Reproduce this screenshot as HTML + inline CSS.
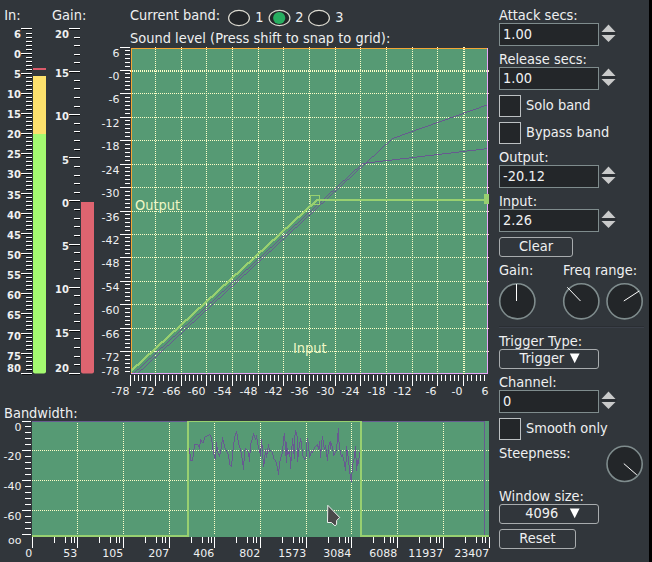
<!DOCTYPE html>
<html lang="en"><head><meta charset="utf-8"><title>Compressor Multi</title>
<style>
html,body{margin:0;padding:0;background:#31363b;overflow:hidden}
body{width:652px;height:562px}
svg{display:block;font-family:"DejaVu Sans","Liberation Sans",sans-serif}
.c{shape-rendering:crispEdges}
</style></head><body>
<svg width="652" height="562" viewBox="0 0 652 562">
<rect x="0" y="0" width="652" height="562" fill="#31363b" />
<rect x="649" y="0" width="3" height="562" fill="#000" />
<g class="c">
<text transform="translate(4.2 20) scale(1 1.055)" font-size="13" text-anchor="start" font-weight="normal" fill="#eff0f1" >In:</text>
<rect x="22" y="29" width="10" height="1" fill="#0c0e10" />
<rect x="21" y="28" width="11" height="1" fill="#ffffff" />
<rect x="27" y="34" width="5" height="1" fill="#0c0e10" />
<rect x="26" y="33" width="6" height="1" fill="#ffffff" />
<rect x="27" y="38" width="5" height="1" fill="#0c0e10" />
<rect x="26" y="37" width="6" height="1" fill="#ffffff" />
<rect x="27" y="42" width="5" height="1" fill="#0c0e10" />
<rect x="26" y="41" width="6" height="1" fill="#ffffff" />
<rect x="27" y="46" width="5" height="1" fill="#0c0e10" />
<rect x="26" y="45" width="6" height="1" fill="#ffffff" />
<rect x="27" y="50" width="5" height="1" fill="#0c0e10" />
<rect x="26" y="49" width="6" height="1" fill="#ffffff" />
<rect x="22" y="54" width="10" height="1" fill="#0c0e10" />
<rect x="21" y="53" width="11" height="1" fill="#ffffff" />
<rect x="27" y="58" width="5" height="1" fill="#0c0e10" />
<rect x="26" y="57" width="6" height="1" fill="#ffffff" />
<rect x="27" y="62" width="5" height="1" fill="#0c0e10" />
<rect x="26" y="61" width="6" height="1" fill="#ffffff" />
<rect x="27" y="66" width="5" height="1" fill="#0c0e10" />
<rect x="26" y="65" width="6" height="1" fill="#ffffff" />
<rect x="27" y="70" width="5" height="1" fill="#0c0e10" />
<rect x="26" y="69" width="6" height="1" fill="#ffffff" />
<rect x="22" y="74" width="10" height="1" fill="#0c0e10" />
<rect x="21" y="73" width="11" height="1" fill="#ffffff" />
<rect x="27" y="78" width="5" height="1" fill="#0c0e10" />
<rect x="26" y="77" width="6" height="1" fill="#ffffff" />
<rect x="27" y="82" width="5" height="1" fill="#0c0e10" />
<rect x="26" y="81" width="6" height="1" fill="#ffffff" />
<rect x="27" y="86" width="5" height="1" fill="#0c0e10" />
<rect x="26" y="85" width="6" height="1" fill="#ffffff" />
<rect x="27" y="90" width="5" height="1" fill="#0c0e10" />
<rect x="26" y="89" width="6" height="1" fill="#ffffff" />
<rect x="22" y="94" width="10" height="1" fill="#0c0e10" />
<rect x="21" y="93" width="11" height="1" fill="#ffffff" />
<rect x="27" y="98" width="5" height="1" fill="#0c0e10" />
<rect x="26" y="97" width="6" height="1" fill="#ffffff" />
<rect x="27" y="102" width="5" height="1" fill="#0c0e10" />
<rect x="26" y="101" width="6" height="1" fill="#ffffff" />
<rect x="27" y="106" width="5" height="1" fill="#0c0e10" />
<rect x="26" y="105" width="6" height="1" fill="#ffffff" />
<rect x="27" y="110" width="5" height="1" fill="#0c0e10" />
<rect x="26" y="109" width="6" height="1" fill="#ffffff" />
<rect x="22" y="114" width="10" height="1" fill="#0c0e10" />
<rect x="21" y="113" width="11" height="1" fill="#ffffff" />
<rect x="27" y="118" width="5" height="1" fill="#0c0e10" />
<rect x="26" y="117" width="6" height="1" fill="#ffffff" />
<rect x="27" y="122" width="5" height="1" fill="#0c0e10" />
<rect x="26" y="121" width="6" height="1" fill="#ffffff" />
<rect x="27" y="126" width="5" height="1" fill="#0c0e10" />
<rect x="26" y="125" width="6" height="1" fill="#ffffff" />
<rect x="27" y="130" width="5" height="1" fill="#0c0e10" />
<rect x="26" y="129" width="6" height="1" fill="#ffffff" />
<rect x="22" y="134" width="10" height="1" fill="#0c0e10" />
<rect x="21" y="133" width="11" height="1" fill="#ffffff" />
<rect x="27" y="138" width="5" height="1" fill="#0c0e10" />
<rect x="26" y="137" width="6" height="1" fill="#ffffff" />
<rect x="27" y="142" width="5" height="1" fill="#0c0e10" />
<rect x="26" y="141" width="6" height="1" fill="#ffffff" />
<rect x="27" y="146" width="5" height="1" fill="#0c0e10" />
<rect x="26" y="145" width="6" height="1" fill="#ffffff" />
<rect x="27" y="150" width="5" height="1" fill="#0c0e10" />
<rect x="26" y="149" width="6" height="1" fill="#ffffff" />
<rect x="22" y="154" width="10" height="1" fill="#0c0e10" />
<rect x="21" y="153" width="11" height="1" fill="#ffffff" />
<rect x="27" y="158" width="5" height="1" fill="#0c0e10" />
<rect x="26" y="157" width="6" height="1" fill="#ffffff" />
<rect x="27" y="162" width="5" height="1" fill="#0c0e10" />
<rect x="26" y="161" width="6" height="1" fill="#ffffff" />
<rect x="27" y="166" width="5" height="1" fill="#0c0e10" />
<rect x="26" y="165" width="6" height="1" fill="#ffffff" />
<rect x="27" y="170" width="5" height="1" fill="#0c0e10" />
<rect x="26" y="169" width="6" height="1" fill="#ffffff" />
<rect x="22" y="174" width="10" height="1" fill="#0c0e10" />
<rect x="21" y="173" width="11" height="1" fill="#ffffff" />
<rect x="27" y="178" width="5" height="1" fill="#0c0e10" />
<rect x="26" y="177" width="6" height="1" fill="#ffffff" />
<rect x="27" y="182" width="5" height="1" fill="#0c0e10" />
<rect x="26" y="181" width="6" height="1" fill="#ffffff" />
<rect x="27" y="186" width="5" height="1" fill="#0c0e10" />
<rect x="26" y="185" width="6" height="1" fill="#ffffff" />
<rect x="27" y="190" width="5" height="1" fill="#0c0e10" />
<rect x="26" y="189" width="6" height="1" fill="#ffffff" />
<rect x="22" y="194" width="10" height="1" fill="#0c0e10" />
<rect x="21" y="193" width="11" height="1" fill="#ffffff" />
<rect x="27" y="198" width="5" height="1" fill="#0c0e10" />
<rect x="26" y="197" width="6" height="1" fill="#ffffff" />
<rect x="27" y="202" width="5" height="1" fill="#0c0e10" />
<rect x="26" y="201" width="6" height="1" fill="#ffffff" />
<rect x="27" y="206" width="5" height="1" fill="#0c0e10" />
<rect x="26" y="205" width="6" height="1" fill="#ffffff" />
<rect x="27" y="210" width="5" height="1" fill="#0c0e10" />
<rect x="26" y="209" width="6" height="1" fill="#ffffff" />
<rect x="22" y="214" width="10" height="1" fill="#0c0e10" />
<rect x="21" y="213" width="11" height="1" fill="#ffffff" />
<rect x="27" y="218" width="5" height="1" fill="#0c0e10" />
<rect x="26" y="217" width="6" height="1" fill="#ffffff" />
<rect x="27" y="222" width="5" height="1" fill="#0c0e10" />
<rect x="26" y="221" width="6" height="1" fill="#ffffff" />
<rect x="27" y="226" width="5" height="1" fill="#0c0e10" />
<rect x="26" y="225" width="6" height="1" fill="#ffffff" />
<rect x="27" y="230" width="5" height="1" fill="#0c0e10" />
<rect x="26" y="229" width="6" height="1" fill="#ffffff" />
<rect x="22" y="234" width="10" height="1" fill="#0c0e10" />
<rect x="21" y="233" width="11" height="1" fill="#ffffff" />
<rect x="27" y="238" width="5" height="1" fill="#0c0e10" />
<rect x="26" y="237" width="6" height="1" fill="#ffffff" />
<rect x="27" y="242" width="5" height="1" fill="#0c0e10" />
<rect x="26" y="241" width="6" height="1" fill="#ffffff" />
<rect x="27" y="246" width="5" height="1" fill="#0c0e10" />
<rect x="26" y="245" width="6" height="1" fill="#ffffff" />
<rect x="27" y="250" width="5" height="1" fill="#0c0e10" />
<rect x="26" y="249" width="6" height="1" fill="#ffffff" />
<rect x="22" y="254" width="10" height="1" fill="#0c0e10" />
<rect x="21" y="253" width="11" height="1" fill="#ffffff" />
<rect x="27" y="258" width="5" height="1" fill="#0c0e10" />
<rect x="26" y="257" width="6" height="1" fill="#ffffff" />
<rect x="27" y="262" width="5" height="1" fill="#0c0e10" />
<rect x="26" y="261" width="6" height="1" fill="#ffffff" />
<rect x="27" y="266" width="5" height="1" fill="#0c0e10" />
<rect x="26" y="265" width="6" height="1" fill="#ffffff" />
<rect x="27" y="270" width="5" height="1" fill="#0c0e10" />
<rect x="26" y="269" width="6" height="1" fill="#ffffff" />
<rect x="22" y="274" width="10" height="1" fill="#0c0e10" />
<rect x="21" y="273" width="11" height="1" fill="#ffffff" />
<rect x="27" y="278" width="5" height="1" fill="#0c0e10" />
<rect x="26" y="277" width="6" height="1" fill="#ffffff" />
<rect x="27" y="282" width="5" height="1" fill="#0c0e10" />
<rect x="26" y="281" width="6" height="1" fill="#ffffff" />
<rect x="27" y="286" width="5" height="1" fill="#0c0e10" />
<rect x="26" y="285" width="6" height="1" fill="#ffffff" />
<rect x="27" y="290" width="5" height="1" fill="#0c0e10" />
<rect x="26" y="289" width="6" height="1" fill="#ffffff" />
<rect x="22" y="294" width="10" height="1" fill="#0c0e10" />
<rect x="21" y="293" width="11" height="1" fill="#ffffff" />
<rect x="27" y="298" width="5" height="1" fill="#0c0e10" />
<rect x="26" y="297" width="6" height="1" fill="#ffffff" />
<rect x="27" y="302" width="5" height="1" fill="#0c0e10" />
<rect x="26" y="301" width="6" height="1" fill="#ffffff" />
<rect x="27" y="306" width="5" height="1" fill="#0c0e10" />
<rect x="26" y="305" width="6" height="1" fill="#ffffff" />
<rect x="27" y="310" width="5" height="1" fill="#0c0e10" />
<rect x="26" y="309" width="6" height="1" fill="#ffffff" />
<rect x="22" y="314" width="10" height="1" fill="#0c0e10" />
<rect x="21" y="313" width="11" height="1" fill="#ffffff" />
<rect x="27" y="318" width="5" height="1" fill="#0c0e10" />
<rect x="26" y="317" width="6" height="1" fill="#ffffff" />
<rect x="27" y="322" width="5" height="1" fill="#0c0e10" />
<rect x="26" y="321" width="6" height="1" fill="#ffffff" />
<rect x="27" y="326" width="5" height="1" fill="#0c0e10" />
<rect x="26" y="325" width="6" height="1" fill="#ffffff" />
<rect x="27" y="330" width="5" height="1" fill="#0c0e10" />
<rect x="26" y="329" width="6" height="1" fill="#ffffff" />
<rect x="22" y="334" width="10" height="1" fill="#0c0e10" />
<rect x="21" y="333" width="11" height="1" fill="#ffffff" />
<rect x="27" y="338" width="5" height="1" fill="#0c0e10" />
<rect x="26" y="337" width="6" height="1" fill="#ffffff" />
<rect x="27" y="342" width="5" height="1" fill="#0c0e10" />
<rect x="26" y="341" width="6" height="1" fill="#ffffff" />
<rect x="27" y="346" width="5" height="1" fill="#0c0e10" />
<rect x="26" y="345" width="6" height="1" fill="#ffffff" />
<rect x="27" y="350" width="5" height="1" fill="#0c0e10" />
<rect x="26" y="349" width="6" height="1" fill="#ffffff" />
<rect x="22" y="354" width="10" height="1" fill="#0c0e10" />
<rect x="21" y="353" width="11" height="1" fill="#ffffff" />
<rect x="27" y="358" width="5" height="1" fill="#0c0e10" />
<rect x="26" y="357" width="6" height="1" fill="#ffffff" />
<rect x="27" y="362" width="5" height="1" fill="#0c0e10" />
<rect x="26" y="361" width="6" height="1" fill="#ffffff" />
<rect x="27" y="366" width="5" height="1" fill="#0c0e10" />
<rect x="26" y="365" width="6" height="1" fill="#ffffff" />
<rect x="27" y="370" width="5" height="1" fill="#0c0e10" />
<rect x="26" y="369" width="6" height="1" fill="#ffffff" />
<rect x="22" y="374" width="10" height="1" fill="#0c0e10" />
<rect x="21" y="373" width="11" height="1" fill="#ffffff" />
</g>
<text x="21" y="37.5" font-size="10" text-anchor="end" font-weight="bold" fill="#eff0f1" >6</text>
<text x="21" y="57.5" font-size="10" text-anchor="end" font-weight="bold" fill="#eff0f1" >0</text>
<text x="21" y="77.7" font-size="10" text-anchor="end" font-weight="bold" fill="#eff0f1" >5</text>
<text x="21" y="97.8" font-size="10" text-anchor="end" font-weight="bold" fill="#eff0f1" >10</text>
<text x="21" y="118.0" font-size="10" text-anchor="end" font-weight="bold" fill="#eff0f1" >15</text>
<text x="21" y="138.1" font-size="10" text-anchor="end" font-weight="bold" fill="#eff0f1" >20</text>
<text x="21" y="158.2" font-size="10" text-anchor="end" font-weight="bold" fill="#eff0f1" >25</text>
<text x="21" y="178.4" font-size="10" text-anchor="end" font-weight="bold" fill="#eff0f1" >30</text>
<text x="21" y="198.6" font-size="10" text-anchor="end" font-weight="bold" fill="#eff0f1" >35</text>
<text x="21" y="218.7" font-size="10" text-anchor="end" font-weight="bold" fill="#eff0f1" >40</text>
<text x="21" y="238.9" font-size="10" text-anchor="end" font-weight="bold" fill="#eff0f1" >45</text>
<text x="21" y="259.0" font-size="10" text-anchor="end" font-weight="bold" fill="#eff0f1" >50</text>
<text x="21" y="279.1" font-size="10" text-anchor="end" font-weight="bold" fill="#eff0f1" >55</text>
<text x="21" y="299.3" font-size="10" text-anchor="end" font-weight="bold" fill="#eff0f1" >60</text>
<text x="21" y="319.4" font-size="10" text-anchor="end" font-weight="bold" fill="#eff0f1" >65</text>
<text x="21" y="339.6" font-size="10" text-anchor="end" font-weight="bold" fill="#eff0f1" >70</text>
<text x="21" y="359.8" font-size="10" text-anchor="end" font-weight="bold" fill="#eff0f1" >75</text>
<text x="21" y="371.9" font-size="10" text-anchor="end" font-weight="bold" fill="#eff0f1" >80</text>
<g class="c">
<rect x="33" y="68" width="13" height="2" fill="#da5a6a" />
<rect x="33" y="76" width="13" height="58" fill="#fce06c" />
</g>
<path d="M33 134 H46 V371.5 Q46 373.5 44 373.5 H35 Q33 373.5 33 371.5 Z" fill="#a4fa70"/>
<text transform="translate(52 20) scale(1 1.055)" font-size="13" text-anchor="start" font-weight="normal" fill="#eff0f1" >Gain:</text>
<g class="c">
<rect x="70" y="29" width="10" height="1" fill="#0c0e10" />
<rect x="69" y="28" width="11" height="1" fill="#ffffff" />
<rect x="75" y="38" width="5" height="1" fill="#0c0e10" />
<rect x="74" y="37" width="6" height="1" fill="#ffffff" />
<rect x="75" y="46" width="5" height="1" fill="#0c0e10" />
<rect x="74" y="45" width="6" height="1" fill="#ffffff" />
<rect x="75" y="55" width="5" height="1" fill="#0c0e10" />
<rect x="74" y="54" width="6" height="1" fill="#ffffff" />
<rect x="75" y="63" width="5" height="1" fill="#0c0e10" />
<rect x="74" y="62" width="6" height="1" fill="#ffffff" />
<rect x="70" y="72" width="10" height="1" fill="#0c0e10" />
<rect x="69" y="71" width="11" height="1" fill="#ffffff" />
<rect x="75" y="81" width="5" height="1" fill="#0c0e10" />
<rect x="74" y="80" width="6" height="1" fill="#ffffff" />
<rect x="75" y="89" width="5" height="1" fill="#0c0e10" />
<rect x="74" y="88" width="6" height="1" fill="#ffffff" />
<rect x="75" y="98" width="5" height="1" fill="#0c0e10" />
<rect x="74" y="97" width="6" height="1" fill="#ffffff" />
<rect x="75" y="107" width="5" height="1" fill="#0c0e10" />
<rect x="74" y="106" width="6" height="1" fill="#ffffff" />
<rect x="70" y="115" width="10" height="1" fill="#0c0e10" />
<rect x="69" y="114" width="11" height="1" fill="#ffffff" />
<rect x="75" y="124" width="5" height="1" fill="#0c0e10" />
<rect x="74" y="123" width="6" height="1" fill="#ffffff" />
<rect x="75" y="132" width="5" height="1" fill="#0c0e10" />
<rect x="74" y="131" width="6" height="1" fill="#ffffff" />
<rect x="75" y="141" width="5" height="1" fill="#0c0e10" />
<rect x="74" y="140" width="6" height="1" fill="#ffffff" />
<rect x="75" y="150" width="5" height="1" fill="#0c0e10" />
<rect x="74" y="149" width="6" height="1" fill="#ffffff" />
<rect x="70" y="158" width="10" height="1" fill="#0c0e10" />
<rect x="69" y="157" width="11" height="1" fill="#ffffff" />
<rect x="75" y="167" width="5" height="1" fill="#0c0e10" />
<rect x="74" y="166" width="6" height="1" fill="#ffffff" />
<rect x="75" y="176" width="5" height="1" fill="#0c0e10" />
<rect x="74" y="175" width="6" height="1" fill="#ffffff" />
<rect x="75" y="184" width="5" height="1" fill="#0c0e10" />
<rect x="74" y="183" width="6" height="1" fill="#ffffff" />
<rect x="75" y="193" width="5" height="1" fill="#0c0e10" />
<rect x="74" y="192" width="6" height="1" fill="#ffffff" />
<rect x="70" y="201" width="10" height="1" fill="#0c0e10" />
<rect x="69" y="200" width="11" height="1" fill="#ffffff" />
<rect x="75" y="210" width="5" height="1" fill="#0c0e10" />
<rect x="74" y="209" width="6" height="1" fill="#ffffff" />
<rect x="75" y="219" width="5" height="1" fill="#0c0e10" />
<rect x="74" y="218" width="6" height="1" fill="#ffffff" />
<rect x="75" y="227" width="5" height="1" fill="#0c0e10" />
<rect x="74" y="226" width="6" height="1" fill="#ffffff" />
<rect x="75" y="236" width="5" height="1" fill="#0c0e10" />
<rect x="74" y="235" width="6" height="1" fill="#ffffff" />
<rect x="70" y="245" width="10" height="1" fill="#0c0e10" />
<rect x="69" y="244" width="11" height="1" fill="#ffffff" />
<rect x="75" y="253" width="5" height="1" fill="#0c0e10" />
<rect x="74" y="252" width="6" height="1" fill="#ffffff" />
<rect x="75" y="262" width="5" height="1" fill="#0c0e10" />
<rect x="74" y="261" width="6" height="1" fill="#ffffff" />
<rect x="75" y="270" width="5" height="1" fill="#0c0e10" />
<rect x="74" y="269" width="6" height="1" fill="#ffffff" />
<rect x="75" y="279" width="5" height="1" fill="#0c0e10" />
<rect x="74" y="278" width="6" height="1" fill="#ffffff" />
<rect x="70" y="288" width="10" height="1" fill="#0c0e10" />
<rect x="69" y="287" width="11" height="1" fill="#ffffff" />
<rect x="75" y="296" width="5" height="1" fill="#0c0e10" />
<rect x="74" y="295" width="6" height="1" fill="#ffffff" />
<rect x="75" y="305" width="5" height="1" fill="#0c0e10" />
<rect x="74" y="304" width="6" height="1" fill="#ffffff" />
<rect x="75" y="314" width="5" height="1" fill="#0c0e10" />
<rect x="74" y="313" width="6" height="1" fill="#ffffff" />
<rect x="75" y="322" width="5" height="1" fill="#0c0e10" />
<rect x="74" y="321" width="6" height="1" fill="#ffffff" />
<rect x="70" y="331" width="10" height="1" fill="#0c0e10" />
<rect x="69" y="330" width="11" height="1" fill="#ffffff" />
<rect x="75" y="339" width="5" height="1" fill="#0c0e10" />
<rect x="74" y="338" width="6" height="1" fill="#ffffff" />
<rect x="75" y="348" width="5" height="1" fill="#0c0e10" />
<rect x="74" y="347" width="6" height="1" fill="#ffffff" />
<rect x="75" y="357" width="5" height="1" fill="#0c0e10" />
<rect x="74" y="356" width="6" height="1" fill="#ffffff" />
<rect x="75" y="365" width="5" height="1" fill="#0c0e10" />
<rect x="74" y="364" width="6" height="1" fill="#ffffff" />
<rect x="70" y="374" width="10" height="1" fill="#0c0e10" />
<rect x="69" y="373" width="11" height="1" fill="#ffffff" />
</g>
<text x="69" y="37.5" font-size="10" text-anchor="end" font-weight="bold" fill="#eff0f1" >20</text>
<text x="69" y="76.6" font-size="10" text-anchor="end" font-weight="bold" fill="#eff0f1" >15</text>
<text x="69" y="120.0" font-size="10" text-anchor="end" font-weight="bold" fill="#eff0f1" >10</text>
<text x="69" y="163.5" font-size="10" text-anchor="end" font-weight="bold" fill="#eff0f1" >5</text>
<text x="69" y="206.7" font-size="10" text-anchor="end" font-weight="bold" fill="#eff0f1" >0</text>
<text x="69" y="249.8" font-size="10" text-anchor="end" font-weight="bold" fill="#eff0f1" >5</text>
<text x="69" y="293.4" font-size="10" text-anchor="end" font-weight="bold" fill="#eff0f1" >10</text>
<text x="69" y="336.8" font-size="10" text-anchor="end" font-weight="bold" fill="#eff0f1" >15</text>
<text x="69" y="371.8" font-size="10" text-anchor="end" font-weight="bold" fill="#eff0f1" >20</text>
<path d="M81 202 H94 V371.5 Q94 373.5 92 373.5 H83 Q81 373.5 81 371.5 Z" fill="#de6470"/>
<text transform="translate(130 20) scale(1 1.055)" font-size="13" text-anchor="start" font-weight="normal" fill="#eff0f1" >Current band:</text>
<ellipse cx="239" cy="18" rx="10.4" ry="7.6" fill="#232629" stroke="#dcdad0" stroke-width="1.2"/>
<ellipse cx="279.5" cy="18" rx="10.4" ry="7.6" fill="#232629" stroke="#dcdad0" stroke-width="1.2"/>
<ellipse cx="279.2" cy="18" rx="6.1" ry="5.9" fill="#27ae60"/>
<ellipse cx="319" cy="18" rx="10.4" ry="7.6" fill="#232629" stroke="#dcdad0" stroke-width="1.2"/>
<text transform="translate(255.2 22) scale(1 1.055)" font-size="13" text-anchor="start" font-weight="normal" fill="#eff0f1" >1</text>
<text transform="translate(295.2 22) scale(1 1.055)" font-size="13" text-anchor="start" font-weight="normal" fill="#eff0f1" >2</text>
<text transform="translate(335.2 22) scale(1 1.055)" font-size="13" text-anchor="start" font-weight="normal" fill="#eff0f1" >3</text>
<text transform="translate(130 43) scale(1 1.055)" font-size="13" text-anchor="start" font-weight="normal" fill="#eff0f1" >Sound level (Press shift to snap to grid):</text>
<g class="c">
<rect x="131" y="48" width="357" height="326" fill="#569a74" />
</g>
<g class="c">
<rect x="120" y="47" width="10" height="1" fill="#ffffff" />
<rect x="125" y="50" width="5" height="1" fill="#ffffff" />
<rect x="125" y="54" width="5" height="1" fill="#ffffff" />
<rect x="125" y="58" width="5" height="1" fill="#ffffff" />
<rect x="125" y="62" width="5" height="1" fill="#ffffff" />
<rect x="125" y="66" width="5" height="1" fill="#ffffff" />
<rect x="120" y="70" width="10" height="1" fill="#ffffff" />
<rect x="125" y="73" width="5" height="1" fill="#ffffff" />
<rect x="125" y="77" width="5" height="1" fill="#ffffff" />
<rect x="125" y="81" width="5" height="1" fill="#ffffff" />
<rect x="125" y="85" width="5" height="1" fill="#ffffff" />
<rect x="125" y="89" width="5" height="1" fill="#ffffff" />
<rect x="120" y="93" width="10" height="1" fill="#ffffff" />
<rect x="125" y="97" width="5" height="1" fill="#ffffff" />
<rect x="125" y="101" width="5" height="1" fill="#ffffff" />
<rect x="125" y="105" width="5" height="1" fill="#ffffff" />
<rect x="125" y="109" width="5" height="1" fill="#ffffff" />
<rect x="125" y="113" width="5" height="1" fill="#ffffff" />
<rect x="120" y="117" width="10" height="1" fill="#ffffff" />
<rect x="125" y="120" width="5" height="1" fill="#ffffff" />
<rect x="125" y="124" width="5" height="1" fill="#ffffff" />
<rect x="125" y="128" width="5" height="1" fill="#ffffff" />
<rect x="125" y="132" width="5" height="1" fill="#ffffff" />
<rect x="125" y="136" width="5" height="1" fill="#ffffff" />
<rect x="120" y="140" width="10" height="1" fill="#ffffff" />
<rect x="125" y="144" width="5" height="1" fill="#ffffff" />
<rect x="125" y="148" width="5" height="1" fill="#ffffff" />
<rect x="125" y="152" width="5" height="1" fill="#ffffff" />
<rect x="125" y="156" width="5" height="1" fill="#ffffff" />
<rect x="125" y="160" width="5" height="1" fill="#ffffff" />
<rect x="120" y="164" width="10" height="1" fill="#ffffff" />
<rect x="125" y="167" width="5" height="1" fill="#ffffff" />
<rect x="125" y="171" width="5" height="1" fill="#ffffff" />
<rect x="125" y="175" width="5" height="1" fill="#ffffff" />
<rect x="125" y="179" width="5" height="1" fill="#ffffff" />
<rect x="125" y="183" width="5" height="1" fill="#ffffff" />
<rect x="120" y="187" width="10" height="1" fill="#ffffff" />
<rect x="125" y="191" width="5" height="1" fill="#ffffff" />
<rect x="125" y="195" width="5" height="1" fill="#ffffff" />
<rect x="125" y="199" width="5" height="1" fill="#ffffff" />
<rect x="125" y="203" width="5" height="1" fill="#ffffff" />
<rect x="125" y="207" width="5" height="1" fill="#ffffff" />
<rect x="120" y="211" width="10" height="1" fill="#ffffff" />
<rect x="125" y="214" width="5" height="1" fill="#ffffff" />
<rect x="125" y="218" width="5" height="1" fill="#ffffff" />
<rect x="125" y="222" width="5" height="1" fill="#ffffff" />
<rect x="125" y="226" width="5" height="1" fill="#ffffff" />
<rect x="125" y="230" width="5" height="1" fill="#ffffff" />
<rect x="120" y="234" width="10" height="1" fill="#ffffff" />
<rect x="125" y="237" width="5" height="1" fill="#ffffff" />
<rect x="125" y="241" width="5" height="1" fill="#ffffff" />
<rect x="125" y="245" width="5" height="1" fill="#ffffff" />
<rect x="125" y="249" width="5" height="1" fill="#ffffff" />
<rect x="125" y="253" width="5" height="1" fill="#ffffff" />
<rect x="120" y="257" width="10" height="1" fill="#ffffff" />
<rect x="125" y="261" width="5" height="1" fill="#ffffff" />
<rect x="125" y="265" width="5" height="1" fill="#ffffff" />
<rect x="125" y="269" width="5" height="1" fill="#ffffff" />
<rect x="125" y="273" width="5" height="1" fill="#ffffff" />
<rect x="125" y="277" width="5" height="1" fill="#ffffff" />
<rect x="120" y="281" width="10" height="1" fill="#ffffff" />
<rect x="125" y="284" width="5" height="1" fill="#ffffff" />
<rect x="125" y="288" width="5" height="1" fill="#ffffff" />
<rect x="125" y="292" width="5" height="1" fill="#ffffff" />
<rect x="125" y="296" width="5" height="1" fill="#ffffff" />
<rect x="125" y="300" width="5" height="1" fill="#ffffff" />
<rect x="120" y="304" width="10" height="1" fill="#ffffff" />
<rect x="125" y="308" width="5" height="1" fill="#ffffff" />
<rect x="125" y="312" width="5" height="1" fill="#ffffff" />
<rect x="125" y="316" width="5" height="1" fill="#ffffff" />
<rect x="125" y="320" width="5" height="1" fill="#ffffff" />
<rect x="125" y="324" width="5" height="1" fill="#ffffff" />
<rect x="120" y="328" width="10" height="1" fill="#ffffff" />
<rect x="125" y="331" width="5" height="1" fill="#ffffff" />
<rect x="125" y="335" width="5" height="1" fill="#ffffff" />
<rect x="125" y="339" width="5" height="1" fill="#ffffff" />
<rect x="125" y="343" width="5" height="1" fill="#ffffff" />
<rect x="125" y="347" width="5" height="1" fill="#ffffff" />
<rect x="120" y="351" width="10" height="1" fill="#ffffff" />
<rect x="125" y="355" width="5" height="1" fill="#ffffff" />
<rect x="125" y="359" width="5" height="1" fill="#ffffff" />
<rect x="125" y="363" width="5" height="1" fill="#ffffff" />
<rect x="125" y="367" width="5" height="1" fill="#ffffff" />
<rect x="125" y="371" width="5" height="1" fill="#ffffff" />
<rect x="130" y="375" width="1" height="11" fill="#fff" />
<rect x="134" y="375" width="1" height="6" fill="#fff" />
<rect x="138" y="375" width="1" height="6" fill="#fff" />
<rect x="142" y="375" width="1" height="6" fill="#fff" />
<rect x="146" y="375" width="1" height="6" fill="#fff" />
<rect x="150" y="375" width="1" height="6" fill="#fff" />
<rect x="155" y="375" width="1" height="11" fill="#fff" />
<rect x="159" y="375" width="1" height="6" fill="#fff" />
<rect x="163" y="375" width="1" height="6" fill="#fff" />
<rect x="168" y="375" width="1" height="6" fill="#fff" />
<rect x="172" y="375" width="1" height="6" fill="#fff" />
<rect x="176" y="375" width="1" height="6" fill="#fff" />
<rect x="181" y="375" width="1" height="11" fill="#fff" />
<rect x="185" y="375" width="1" height="6" fill="#fff" />
<rect x="189" y="375" width="1" height="6" fill="#fff" />
<rect x="193" y="375" width="1" height="6" fill="#fff" />
<rect x="197" y="375" width="1" height="6" fill="#fff" />
<rect x="201" y="375" width="1" height="6" fill="#fff" />
<rect x="206" y="375" width="1" height="11" fill="#fff" />
<rect x="210" y="375" width="1" height="6" fill="#fff" />
<rect x="214" y="375" width="1" height="6" fill="#fff" />
<rect x="219" y="375" width="1" height="6" fill="#fff" />
<rect x="223" y="375" width="1" height="6" fill="#fff" />
<rect x="227" y="375" width="1" height="6" fill="#fff" />
<rect x="232" y="375" width="1" height="11" fill="#fff" />
<rect x="236" y="375" width="1" height="6" fill="#fff" />
<rect x="240" y="375" width="1" height="6" fill="#fff" />
<rect x="245" y="375" width="1" height="6" fill="#fff" />
<rect x="249" y="375" width="1" height="6" fill="#fff" />
<rect x="253" y="375" width="1" height="6" fill="#fff" />
<rect x="258" y="375" width="1" height="11" fill="#fff" />
<rect x="262" y="375" width="1" height="6" fill="#fff" />
<rect x="266" y="375" width="1" height="6" fill="#fff" />
<rect x="270" y="375" width="1" height="6" fill="#fff" />
<rect x="274" y="375" width="1" height="6" fill="#fff" />
<rect x="278" y="375" width="1" height="6" fill="#fff" />
<rect x="283" y="375" width="1" height="11" fill="#fff" />
<rect x="287" y="375" width="1" height="6" fill="#fff" />
<rect x="291" y="375" width="1" height="6" fill="#fff" />
<rect x="296" y="375" width="1" height="6" fill="#fff" />
<rect x="300" y="375" width="1" height="6" fill="#fff" />
<rect x="304" y="375" width="1" height="6" fill="#fff" />
<rect x="309" y="375" width="1" height="11" fill="#fff" />
<rect x="313" y="375" width="1" height="6" fill="#fff" />
<rect x="317" y="375" width="1" height="6" fill="#fff" />
<rect x="322" y="375" width="1" height="6" fill="#fff" />
<rect x="326" y="375" width="1" height="6" fill="#fff" />
<rect x="330" y="375" width="1" height="6" fill="#fff" />
<rect x="335" y="375" width="1" height="11" fill="#fff" />
<rect x="339" y="375" width="1" height="6" fill="#fff" />
<rect x="343" y="375" width="1" height="6" fill="#fff" />
<rect x="347" y="375" width="1" height="6" fill="#fff" />
<rect x="351" y="375" width="1" height="6" fill="#fff" />
<rect x="355" y="375" width="1" height="6" fill="#fff" />
<rect x="360" y="375" width="1" height="11" fill="#fff" />
<rect x="364" y="375" width="1" height="6" fill="#fff" />
<rect x="368" y="375" width="1" height="6" fill="#fff" />
<rect x="373" y="375" width="1" height="6" fill="#fff" />
<rect x="377" y="375" width="1" height="6" fill="#fff" />
<rect x="381" y="375" width="1" height="6" fill="#fff" />
<rect x="386" y="375" width="1" height="11" fill="#fff" />
<rect x="390" y="375" width="1" height="6" fill="#fff" />
<rect x="394" y="375" width="1" height="6" fill="#fff" />
<rect x="399" y="375" width="1" height="6" fill="#fff" />
<rect x="403" y="375" width="1" height="6" fill="#fff" />
<rect x="407" y="375" width="1" height="6" fill="#fff" />
<rect x="412" y="375" width="1" height="11" fill="#fff" />
<rect x="416" y="375" width="1" height="6" fill="#fff" />
<rect x="420" y="375" width="1" height="6" fill="#fff" />
<rect x="424" y="375" width="1" height="6" fill="#fff" />
<rect x="428" y="375" width="1" height="6" fill="#fff" />
<rect x="432" y="375" width="1" height="6" fill="#fff" />
<rect x="437" y="375" width="1" height="11" fill="#fff" />
<rect x="441" y="375" width="1" height="6" fill="#fff" />
<rect x="445" y="375" width="1" height="6" fill="#fff" />
<rect x="450" y="375" width="1" height="6" fill="#fff" />
<rect x="454" y="375" width="1" height="6" fill="#fff" />
<rect x="458" y="375" width="1" height="6" fill="#fff" />
<rect x="463" y="375" width="1" height="11" fill="#fff" />
<rect x="467" y="375" width="1" height="6" fill="#fff" />
<rect x="471" y="375" width="1" height="6" fill="#fff" />
<rect x="476" y="375" width="1" height="6" fill="#fff" />
<rect x="480" y="375" width="1" height="6" fill="#fff" />
<rect x="484" y="375" width="1" height="6" fill="#fff" />
</g>
<text x="119.4" y="57" font-size="11" text-anchor="end" font-weight="normal" fill="#eff0f1" >6</text>
<text x="488.5" y="395" font-size="11" text-anchor="end" font-weight="normal" fill="#eff0f1" >6</text>
<text x="119.4" y="79.5" font-size="11" text-anchor="end" font-weight="normal" fill="#eff0f1" >-0</text>
<text x="462.5" y="395" font-size="11" text-anchor="end" font-weight="normal" fill="#eff0f1" >-0</text>
<text x="119.4" y="102.5" font-size="11" text-anchor="end" font-weight="normal" fill="#eff0f1" >-6</text>
<text x="436.5" y="395" font-size="11" text-anchor="end" font-weight="normal" fill="#eff0f1" >-6</text>
<text x="119.4" y="126.5" font-size="11" text-anchor="end" font-weight="normal" fill="#eff0f1" >-12</text>
<text x="411.5" y="395" font-size="11" text-anchor="end" font-weight="normal" fill="#eff0f1" >-12</text>
<text x="119.4" y="149.5" font-size="11" text-anchor="end" font-weight="normal" fill="#eff0f1" >-18</text>
<text x="385.5" y="395" font-size="11" text-anchor="end" font-weight="normal" fill="#eff0f1" >-18</text>
<text x="119.4" y="173.5" font-size="11" text-anchor="end" font-weight="normal" fill="#eff0f1" >-24</text>
<text x="359.5" y="395" font-size="11" text-anchor="end" font-weight="normal" fill="#eff0f1" >-24</text>
<text x="119.4" y="196.5" font-size="11" text-anchor="end" font-weight="normal" fill="#eff0f1" >-30</text>
<text x="334.5" y="395" font-size="11" text-anchor="end" font-weight="normal" fill="#eff0f1" >-30</text>
<text x="119.4" y="220.5" font-size="11" text-anchor="end" font-weight="normal" fill="#eff0f1" >-36</text>
<text x="308.5" y="395" font-size="11" text-anchor="end" font-weight="normal" fill="#eff0f1" >-36</text>
<text x="119.4" y="243.5" font-size="11" text-anchor="end" font-weight="normal" fill="#eff0f1" >-42</text>
<text x="282.5" y="395" font-size="11" text-anchor="end" font-weight="normal" fill="#eff0f1" >-42</text>
<text x="119.4" y="266.5" font-size="11" text-anchor="end" font-weight="normal" fill="#eff0f1" >-48</text>
<text x="257.5" y="395" font-size="11" text-anchor="end" font-weight="normal" fill="#eff0f1" >-48</text>
<text x="119.4" y="290.5" font-size="11" text-anchor="end" font-weight="normal" fill="#eff0f1" >-54</text>
<text x="231.5" y="395" font-size="11" text-anchor="end" font-weight="normal" fill="#eff0f1" >-54</text>
<text x="119.4" y="313.5" font-size="11" text-anchor="end" font-weight="normal" fill="#eff0f1" >-60</text>
<text x="205.5" y="395" font-size="11" text-anchor="end" font-weight="normal" fill="#eff0f1" >-60</text>
<text x="119.4" y="337.5" font-size="11" text-anchor="end" font-weight="normal" fill="#eff0f1" >-66</text>
<text x="180.5" y="395" font-size="11" text-anchor="end" font-weight="normal" fill="#eff0f1" >-66</text>
<text x="119.4" y="360.5" font-size="11" text-anchor="end" font-weight="normal" fill="#eff0f1" >-72</text>
<text x="154.5" y="395" font-size="11" text-anchor="end" font-weight="normal" fill="#eff0f1" >-72</text>
<text x="119.4" y="374.8" font-size="11" text-anchor="end" font-weight="normal" fill="#eff0f1" >-78</text>
<text x="129.5" y="395" font-size="11" text-anchor="end" font-weight="normal" fill="#eff0f1" >-78</text>
<g class="c">
<rect x="131" y="48" width="357" height="1" fill="#f2a536" />
<rect x="131" y="48" width="1" height="325" fill="#f2a536" />
<rect x="131" y="373" width="357" height="1" fill="#e8a6fa" />
<rect x="487" y="48" width="1" height="326" fill="#e8a6fa" />
<line x1="130" y1="70.5" x2="489" y2="70.5" stroke="#ffffc8" stroke-width="1" stroke-dasharray="1 1" stroke-dashoffset="0"/>
<line x1="130" y1="71.5" x2="489" y2="71.5" stroke="#ffffc8" stroke-width="1" stroke-dasharray="1 1" stroke-dashoffset="0"/>
<line x1="130" y1="93.5" x2="489" y2="93.5" stroke="#ffffc8" stroke-width="1" stroke-dasharray="1 1" stroke-dashoffset="0"/>
<line x1="130" y1="117.5" x2="489" y2="117.5" stroke="#ffffc8" stroke-width="1" stroke-dasharray="1 1" stroke-dashoffset="0"/>
<line x1="130" y1="140.5" x2="489" y2="140.5" stroke="#ffffc8" stroke-width="1" stroke-dasharray="1 1" stroke-dashoffset="0"/>
<line x1="130" y1="164.5" x2="489" y2="164.5" stroke="#ffffc8" stroke-width="1" stroke-dasharray="1 1" stroke-dashoffset="0"/>
<line x1="130" y1="187.5" x2="489" y2="187.5" stroke="#ffffc8" stroke-width="1" stroke-dasharray="1 1" stroke-dashoffset="0"/>
<line x1="130" y1="211.5" x2="489" y2="211.5" stroke="#ffffc8" stroke-width="1" stroke-dasharray="1 1" stroke-dashoffset="0"/>
<line x1="130" y1="234.5" x2="489" y2="234.5" stroke="#ffffc8" stroke-width="1" stroke-dasharray="1 1" stroke-dashoffset="0"/>
<line x1="130" y1="257.5" x2="489" y2="257.5" stroke="#ffffc8" stroke-width="1" stroke-dasharray="1 1" stroke-dashoffset="0"/>
<line x1="130" y1="281.5" x2="489" y2="281.5" stroke="#ffffc8" stroke-width="1" stroke-dasharray="1 1" stroke-dashoffset="0"/>
<line x1="130" y1="304.5" x2="489" y2="304.5" stroke="#ffffc8" stroke-width="1" stroke-dasharray="1 1" stroke-dashoffset="0"/>
<line x1="130" y1="328.5" x2="489" y2="328.5" stroke="#ffffc8" stroke-width="1" stroke-dasharray="1 1" stroke-dashoffset="0"/>
<line x1="130" y1="351.5" x2="489" y2="351.5" stroke="#ffffc8" stroke-width="1" stroke-dasharray="1 1" stroke-dashoffset="0"/>
<line x1="155.5" y1="47" x2="155.5" y2="374" stroke="#ffffc8" stroke-width="1" stroke-dasharray="1 1" stroke-dashoffset="0"/>
<line x1="181.5" y1="47" x2="181.5" y2="374" stroke="#ffffc8" stroke-width="1" stroke-dasharray="1 1" stroke-dashoffset="0"/>
<line x1="206.5" y1="47" x2="206.5" y2="374" stroke="#ffffc8" stroke-width="1" stroke-dasharray="1 1" stroke-dashoffset="0"/>
<line x1="232.5" y1="47" x2="232.5" y2="374" stroke="#ffffc8" stroke-width="1" stroke-dasharray="1 1" stroke-dashoffset="0"/>
<line x1="258.5" y1="47" x2="258.5" y2="374" stroke="#ffffc8" stroke-width="1" stroke-dasharray="1 1" stroke-dashoffset="0"/>
<line x1="283.5" y1="47" x2="283.5" y2="374" stroke="#ffffc8" stroke-width="1" stroke-dasharray="1 1" stroke-dashoffset="0"/>
<line x1="309.5" y1="47" x2="309.5" y2="374" stroke="#ffffc8" stroke-width="1" stroke-dasharray="1 1" stroke-dashoffset="0"/>
<line x1="335.5" y1="47" x2="335.5" y2="374" stroke="#ffffc8" stroke-width="1" stroke-dasharray="1 1" stroke-dashoffset="0"/>
<line x1="360.5" y1="47" x2="360.5" y2="374" stroke="#ffffc8" stroke-width="1" stroke-dasharray="1 1" stroke-dashoffset="0"/>
<line x1="386.5" y1="47" x2="386.5" y2="374" stroke="#ffffc8" stroke-width="1" stroke-dasharray="1 1" stroke-dashoffset="0"/>
<line x1="412.5" y1="47" x2="412.5" y2="374" stroke="#ffffc8" stroke-width="1" stroke-dasharray="1 1" stroke-dashoffset="0"/>
<line x1="437.5" y1="47" x2="437.5" y2="374" stroke="#ffffc8" stroke-width="1" stroke-dasharray="1 1" stroke-dashoffset="0"/>
<line x1="463.5" y1="47" x2="463.5" y2="374" stroke="#ffffc8" stroke-width="1" stroke-dasharray="1 1" stroke-dashoffset="0"/>
<line x1="464.5" y1="47" x2="464.5" y2="374" stroke="#ffffc8" stroke-width="1" stroke-dasharray="1 1" stroke-dashoffset="0"/>
</g>
<g class="c">
<path class="c" d="M484 148.5h3M476 149.5h8M467 150.5h9M459 151.5h8M451 152.5h8M442 153.5h9M434 154.5h8M425 155.5h9M417 156.5h8M409 157.5h8M400 158.5h9M392 159.5h8M383 160.5h9M375 161.5h8M367 162.5h8M362 163.5h5M361 164.5h1M360 165.5h1M359 166.5h1M358 167.5h1M357 168.5h1M355 169.5h2M354 170.5h1M353 171.5h1M352 172.5h1M351 173.5h1M350 174.5h1M349 175.5h1M348 176.5h1M347 177.5h1M346 178.5h1M345 179.5h1M343 180.5h2M342 181.5h1M341 182.5h1M340 183.5h1M339 184.5h1M338 185.5h1M337 186.5h1M336 187.5h1M335 188.5h1M334 189.5h1M333 190.5h1M331 191.5h2M330 192.5h1M329 193.5h1M328 194.5h1M327 195.5h1M326 196.5h1M325 197.5h1M324 198.5h1M323 199.5h1M322 200.5h1M321 201.5h1M319 202.5h2M318 203.5h1M317 204.5h1M316 205.5h1M315 206.5h1M314 207.5h1M313 208.5h1M312 209.5h1M311 210.5h1M310 211.5h1M309 212.5h1M307 213.5h2M306 214.5h1M305 215.5h1M304 216.5h1M303 217.5h1M302 218.5h1M301 219.5h1M300 220.5h1M299 221.5h1M298 222.5h1M297 223.5h1M295 224.5h2M294 225.5h1M293 226.5h1M292 227.5h1M291 228.5h1M290 229.5h1M289 230.5h1M288 231.5h1M287 232.5h1M286 233.5h1M285 234.5h1M284 235.5h1M282 236.5h2M281 237.5h1M280 238.5h1M279 239.5h1M278 240.5h1M277 241.5h1M276 242.5h1M275 243.5h1M274 244.5h1M273 245.5h1M272 246.5h1M270 247.5h2M269 248.5h1M268 249.5h1M267 250.5h1M266 251.5h1M265 252.5h1M264 253.5h1M263 254.5h1M262 255.5h1M261 256.5h1M260 257.5h1M258 258.5h2M257 259.5h1M256 260.5h1M255 261.5h1M254 262.5h1M253 263.5h1M252 264.5h1M251 265.5h1M250 266.5h1M249 267.5h1M248 268.5h1M246 269.5h2M245 270.5h1M244 271.5h1M243 272.5h1M242 273.5h1M241 274.5h1M240 275.5h1M239 276.5h1M238 277.5h1M237 278.5h1M236 279.5h1M234 280.5h2M233 281.5h1M232 282.5h1M231 283.5h1M230 284.5h1M229 285.5h1M228 286.5h1M227 287.5h1M226 288.5h1M225 289.5h1M224 290.5h1M222 291.5h2M221 292.5h1M220 293.5h1M219 294.5h1M218 295.5h1M217 296.5h1M216 297.5h1M215 298.5h1M214 299.5h1M213 300.5h1M212 301.5h1M210 302.5h2M209 303.5h1M208 304.5h1M207 305.5h1M206 306.5h1M205 307.5h1M204 308.5h1M203 309.5h1M202 310.5h1M201 311.5h1M200 312.5h1M199 313.5h1M197 314.5h2M196 315.5h1M195 316.5h1M194 317.5h1M193 318.5h1M192 319.5h1M191 320.5h1M190 321.5h1M189 322.5h1M188 323.5h1M187 324.5h1M185 325.5h2M184 326.5h1M183 327.5h1M182 328.5h1M181 329.5h1M180 330.5h1M179 331.5h1M178 332.5h1M177 333.5h1M176 334.5h1M175 335.5h1M173 336.5h2M172 337.5h1M171 338.5h1M170 339.5h1M169 340.5h1M168 341.5h1M167 342.5h1M166 343.5h1M165 344.5h1M164 345.5h1M163 346.5h1M161 347.5h2M160 348.5h1M159 349.5h1M158 350.5h1M157 351.5h1M156 352.5h1M155 353.5h1M154 354.5h1M153 355.5h1M152 356.5h1M151 357.5h1M149 358.5h2M148 359.5h1M147 360.5h1M146 361.5h1M145 362.5h1M144 363.5h1M143 364.5h1M142 365.5h1M141 366.5h1M140 367.5h1M139 368.5h1M137 369.5h2M136 370.5h1M135 371.5h1M134 372.5h1" stroke="#675a90" stroke-width="1" fill="none"/>
<path class="c" d="M484 105.5h3M481 106.5h3M479 107.5h2M476 108.5h3M473 109.5h3M470 110.5h3M467 111.5h3M464 112.5h3M462 113.5h2M459 114.5h3M456 115.5h3M453 116.5h3M450 117.5h3M448 118.5h2M445 119.5h3M442 120.5h3M439 121.5h3M436 122.5h3M433 123.5h3M431 124.5h2M428 125.5h3M425 126.5h3M422 127.5h3M419 128.5h3M416 129.5h3M414 130.5h2M411 131.5h3M408 132.5h3M405 133.5h3M402 134.5h3M400 135.5h2M397 136.5h3M394 137.5h3M392 138.5h2M391 139.5h1M390 140.5h1M389 141.5h1M388 142.5h1M387 143.5h1M385 144.5h2M384 145.5h1M383 146.5h1M382 147.5h1M381 148.5h1M380 149.5h1M379 150.5h1M378 151.5h1M377 152.5h1M376 153.5h1M375 154.5h1M374 155.5h1M372 156.5h2M371 157.5h1M370 158.5h1M369 159.5h1M368 160.5h1M367 161.5h1M366 162.5h1M365 163.5h1M364 164.5h1M363 165.5h1M362 166.5h1M361 167.5h1M359 168.5h2M358 169.5h1M357 170.5h1M356 171.5h1M355 172.5h1M354 173.5h1M353 174.5h1M352 175.5h1M351 176.5h1M350 177.5h1M349 178.5h1M347 179.5h2M346 180.5h1M345 181.5h1M344 182.5h1M343 183.5h1M342 184.5h1M341 185.5h1M340 186.5h1M339 187.5h1M338 188.5h1M337 189.5h1M336 190.5h1M334 191.5h2M333 192.5h1M332 193.5h1M331 194.5h1M330 195.5h1M329 196.5h1M328 197.5h1M327 198.5h1M326 199.5h1M325 200.5h1M324 201.5h1M323 202.5h1M321 203.5h2M320 204.5h1M319 205.5h1M318 206.5h1M317 207.5h1M316 208.5h1M315 209.5h1M314 210.5h1M313 211.5h1M312 212.5h1M311 213.5h1M310 214.5h1M308 215.5h2M307 216.5h1M306 217.5h1M305 218.5h1M304 219.5h1M303 220.5h1M302 221.5h1M301 222.5h1M300 223.5h1M299 224.5h1M298 225.5h1M297 226.5h1M295 227.5h2M294 228.5h1M293 229.5h1M292 230.5h1M291 231.5h1M290 232.5h1M289 233.5h1M288 234.5h1M287 235.5h1M286 236.5h1M285 237.5h1M284 238.5h1M282 239.5h2M281 240.5h1M280 241.5h1M279 242.5h1M278 243.5h1M277 244.5h1M276 245.5h1M275 246.5h1M274 247.5h1M273 248.5h1M272 249.5h1M271 250.5h1M269 251.5h2M268 252.5h1M267 253.5h1M266 254.5h1M265 255.5h1M264 256.5h1M263 257.5h1M262 258.5h1M261 259.5h1M260 260.5h1M259 261.5h1M257 262.5h2M256 263.5h1M255 264.5h1M254 265.5h1M253 266.5h1M252 267.5h1M251 268.5h1M250 269.5h1M249 270.5h1M248 271.5h1M247 272.5h1M246 273.5h1M244 274.5h2M243 275.5h1M242 276.5h1M241 277.5h1M240 278.5h1M239 279.5h1M238 280.5h1M237 281.5h1M236 282.5h1M235 283.5h1M234 284.5h1M233 285.5h1M231 286.5h2M230 287.5h1M229 288.5h1M228 289.5h1M227 290.5h1M226 291.5h1M225 292.5h1M224 293.5h1M223 294.5h1M222 295.5h1M221 296.5h1M220 297.5h1M218 298.5h2M217 299.5h1M216 300.5h1M215 301.5h1M214 302.5h1M213 303.5h1M212 304.5h1M211 305.5h1M210 306.5h1M209 307.5h1M208 308.5h1M207 309.5h1M205 310.5h2M204 311.5h1M203 312.5h1M202 313.5h1M201 314.5h1M200 315.5h1M199 316.5h1M198 317.5h1M197 318.5h1M196 319.5h1M195 320.5h1M194 321.5h1M192 322.5h2M191 323.5h1M190 324.5h1M189 325.5h1M188 326.5h1M187 327.5h1M186 328.5h1M185 329.5h1M184 330.5h1M183 331.5h1M182 332.5h1M181 333.5h1M179 334.5h2M178 335.5h1M177 336.5h1M176 337.5h1M175 338.5h1M174 339.5h1M173 340.5h1M172 341.5h1M171 342.5h1M170 343.5h1M169 344.5h1M167 345.5h2M166 346.5h1M165 347.5h1M164 348.5h1M163 349.5h1M162 350.5h1M161 351.5h1M160 352.5h1M159 353.5h1M158 354.5h1M157 355.5h1M156 356.5h1M154 357.5h2M153 358.5h1M152 359.5h1M151 360.5h1M150 361.5h1M149 362.5h1M148 363.5h1M147 364.5h1M146 365.5h1M145 366.5h1M144 367.5h1M143 368.5h1M141 369.5h2M140 370.5h1M139 371.5h1M138 372.5h1" stroke="#675a90" stroke-width="1" fill="none"/>
<path class="c" d="M316 199.5h172M315 200.5h173M314 201.5h2M313 202.5h2M312 203.5h2M311 204.5h2M309 205.5h3M308 206.5h3M307 207.5h2M306 208.5h2M305 209.5h2M304 210.5h2M303 211.5h2M302 212.5h2M301 213.5h2M300 214.5h2M299 215.5h2M297 216.5h3M296 217.5h3M295 218.5h2M294 219.5h2M293 220.5h2M292 221.5h2M291 222.5h2M290 223.5h2M289 224.5h2M288 225.5h2M287 226.5h2M285 227.5h3M284 228.5h3M283 229.5h2M282 230.5h2M281 231.5h2M280 232.5h2M279 233.5h2M278 234.5h2M277 235.5h2M276 236.5h2M275 237.5h2M274 238.5h2M272 239.5h3M271 240.5h3M270 241.5h2M269 242.5h2M268 243.5h2M267 244.5h2M266 245.5h2M265 246.5h2M264 247.5h2M263 248.5h2M262 249.5h2M260 250.5h3M259 251.5h3M258 252.5h2M257 253.5h2M256 254.5h2M255 255.5h2M254 256.5h2M253 257.5h2M252 258.5h2M251 259.5h2M250 260.5h2M249 261.5h2M247 262.5h3M246 263.5h3M245 264.5h2M244 265.5h2M243 266.5h2M242 267.5h2M241 268.5h2M240 269.5h2M239 270.5h2M238 271.5h2M237 272.5h2M235 273.5h3M234 274.5h3M233 275.5h2M232 276.5h2M231 277.5h2M230 278.5h2M229 279.5h2M228 280.5h2M227 281.5h2M226 282.5h2M225 283.5h2M223 284.5h3M222 285.5h3M221 286.5h2M220 287.5h2M219 288.5h2M218 289.5h2M217 290.5h2M216 291.5h2M215 292.5h2M214 293.5h2M213 294.5h2M212 295.5h2M210 296.5h3M209 297.5h3M208 298.5h2M207 299.5h2M206 300.5h2M205 301.5h2M204 302.5h2M203 303.5h2M202 304.5h2M201 305.5h2M200 306.5h2M198 307.5h3M197 308.5h3M196 309.5h2M195 310.5h2M194 311.5h2M193 312.5h2M192 313.5h2M191 314.5h2M190 315.5h2M189 316.5h2M188 317.5h2M187 318.5h2M185 319.5h3M184 320.5h3M183 321.5h2M182 322.5h2M181 323.5h2M180 324.5h2M179 325.5h2M178 326.5h2M177 327.5h2M176 328.5h2M175 329.5h2M173 330.5h3M172 331.5h3M171 332.5h2M170 333.5h2M169 334.5h2M168 335.5h2M167 336.5h2M166 337.5h2M165 338.5h2M164 339.5h2M163 340.5h2M161 341.5h3M160 342.5h3M159 343.5h2M158 344.5h2M157 345.5h2M156 346.5h2M155 347.5h2M154 348.5h2M153 349.5h2M152 350.5h2M151 351.5h2M150 352.5h2M148 353.5h3M147 354.5h3M146 355.5h2M145 356.5h2M144 357.5h2M143 358.5h2M142 359.5h2M141 360.5h2M140 361.5h2M139 362.5h2M138 363.5h2M136 364.5h3M135 365.5h3M134 366.5h2M133 367.5h2M132 368.5h2M131 369.5h2M131 370.5h1" stroke="#98d070" stroke-width="1" fill="none"/>
<path class="c" d="M317 199.5h1M316 200.5h2M315 201.5h2M314 202.5h2M313 203.5h2M312 204.5h2M310 205.5h3M309 206.5h3M308 207.5h2M307 208.5h2M306 209.5h2M305 210.5h2M304 211.5h2M303 212.5h2M302 213.5h2M301 214.5h2M300 215.5h2M298 216.5h3M297 217.5h3M296 218.5h2M295 219.5h2M294 220.5h2M293 221.5h2M292 222.5h2M291 223.5h2M290 224.5h2M289 225.5h2M288 226.5h2M286 227.5h3M285 228.5h3M284 229.5h2M283 230.5h2M282 231.5h2M281 232.5h2M280 233.5h2M279 234.5h2M278 235.5h2M277 236.5h2M276 237.5h2M275 238.5h2M273 239.5h3M272 240.5h3M271 241.5h2M270 242.5h2M269 243.5h2M268 244.5h2M267 245.5h2M266 246.5h2M265 247.5h2M264 248.5h2M263 249.5h2M261 250.5h3M260 251.5h3M259 252.5h2M258 253.5h2M257 254.5h2M256 255.5h2M255 256.5h2M254 257.5h2M253 258.5h2M252 259.5h2M251 260.5h2M250 261.5h2M248 262.5h3M247 263.5h3M246 264.5h2M245 265.5h2M244 266.5h2M243 267.5h2M242 268.5h2M241 269.5h2M240 270.5h2M239 271.5h2M238 272.5h2M236 273.5h3M235 274.5h3M234 275.5h2M233 276.5h2M232 277.5h2M231 278.5h2M230 279.5h2M229 280.5h2M228 281.5h2M227 282.5h2M226 283.5h2M224 284.5h3M223 285.5h3M222 286.5h2M221 287.5h2M220 288.5h2M219 289.5h2M218 290.5h2M217 291.5h2M216 292.5h2M215 293.5h2M214 294.5h2M213 295.5h2M211 296.5h3M210 297.5h3M209 298.5h2M208 299.5h2M207 300.5h2M206 301.5h2M205 302.5h2M204 303.5h2M203 304.5h2M202 305.5h2M201 306.5h2M199 307.5h3M198 308.5h3M197 309.5h2M196 310.5h2M195 311.5h2M194 312.5h2M193 313.5h2M192 314.5h2M191 315.5h2M190 316.5h2M189 317.5h2M188 318.5h2M186 319.5h3M185 320.5h3M184 321.5h2M183 322.5h2M182 323.5h2M181 324.5h2M180 325.5h2M179 326.5h2M178 327.5h2M177 328.5h2M176 329.5h2M174 330.5h3M173 331.5h3M172 332.5h2M171 333.5h2M170 334.5h2M169 335.5h2M168 336.5h2M167 337.5h2M166 338.5h2M165 339.5h2M164 340.5h2M162 341.5h3M161 342.5h3M160 343.5h2M159 344.5h2M158 345.5h2M157 346.5h2M156 347.5h2M155 348.5h2M154 349.5h2M153 350.5h2M152 351.5h2M151 352.5h2M149 353.5h3M148 354.5h3M147 355.5h2M146 356.5h2M145 357.5h2M144 358.5h2M143 359.5h2M142 360.5h2M141 361.5h2M140 362.5h2M139 363.5h2M137 364.5h3M136 365.5h3M135 366.5h2M134 367.5h2M133 368.5h2M132 369.5h2M131 370.5h2M131 371.5h1" stroke="#98d070" stroke-width="1" fill="none"/>
<rect x="310.5" y="195.5" width="9" height="9" fill="none" stroke="#98d070" stroke-width="1"/>
</g>
<rect x="484" y="194" width="5" height="10" fill="#98d070" class="c"/>
<text transform="translate(135 210) scale(1 1.055)" font-size="13" text-anchor="start" font-weight="normal" fill="#eef6c4" >Output</text>
<text transform="translate(293 353) scale(1 1.055)" font-size="13" text-anchor="start" font-weight="normal" fill="#eef6c4" >Input</text>
<text transform="translate(4 418) scale(1 1.055)" font-size="13" text-anchor="start" font-weight="normal" fill="#eff0f1" >Bandwidth:</text>
<g class="c">
<rect x="32" y="421" width="457" height="116" fill="#569a74" />
<rect x="22" y="421" width="9" height="1" fill="#ffffff" />
<rect x="25" y="426" width="6" height="1" fill="#ffffff" />
<rect x="25" y="432" width="6" height="1" fill="#ffffff" />
<rect x="25" y="438" width="6" height="1" fill="#ffffff" />
<rect x="25" y="444" width="6" height="1" fill="#ffffff" />
<rect x="22" y="450" width="9" height="1" fill="#ffffff" />
<rect x="25" y="456" width="6" height="1" fill="#ffffff" />
<rect x="25" y="462" width="6" height="1" fill="#ffffff" />
<rect x="25" y="468" width="6" height="1" fill="#ffffff" />
<rect x="25" y="474" width="6" height="1" fill="#ffffff" />
<rect x="22" y="480" width="9" height="1" fill="#ffffff" />
<rect x="25" y="486" width="6" height="1" fill="#ffffff" />
<rect x="25" y="492" width="6" height="1" fill="#ffffff" />
<rect x="25" y="498" width="6" height="1" fill="#ffffff" />
<rect x="25" y="504" width="6" height="1" fill="#ffffff" />
<rect x="22" y="510" width="9" height="1" fill="#ffffff" />
<rect x="25" y="516" width="6" height="1" fill="#ffffff" />
<rect x="25" y="522" width="6" height="1" fill="#ffffff" />
<rect x="25" y="528" width="6" height="1" fill="#ffffff" />
<rect x="22" y="534" width="9" height="1" fill="#ffffff" />
<rect x="32" y="537" width="1" height="11" fill="#fff" />
<rect x="54" y="537" width="1" height="6" fill="#fff" />
<rect x="65" y="537" width="1" height="6" fill="#fff" />
<rect x="71" y="537" width="1" height="6" fill="#fff" />
<rect x="74" y="537" width="1" height="6" fill="#fff" />
<rect x="77" y="537" width="1" height="11" fill="#fff" />
<rect x="99" y="537" width="1" height="6" fill="#fff" />
<rect x="110" y="537" width="1" height="6" fill="#fff" />
<rect x="116" y="537" width="1" height="6" fill="#fff" />
<rect x="119" y="537" width="1" height="6" fill="#fff" />
<rect x="123" y="537" width="1" height="11" fill="#fff" />
<rect x="145" y="537" width="1" height="6" fill="#fff" />
<rect x="156" y="537" width="1" height="6" fill="#fff" />
<rect x="162" y="537" width="1" height="6" fill="#fff" />
<rect x="165" y="537" width="1" height="6" fill="#fff" />
<rect x="169" y="537" width="1" height="11" fill="#fff" />
<rect x="191" y="537" width="1" height="6" fill="#fff" />
<rect x="202" y="537" width="1" height="6" fill="#fff" />
<rect x="208" y="537" width="1" height="6" fill="#fff" />
<rect x="211" y="537" width="1" height="6" fill="#fff" />
<rect x="214" y="537" width="1" height="11" fill="#fff" />
<rect x="236" y="537" width="1" height="6" fill="#fff" />
<rect x="247" y="537" width="1" height="6" fill="#fff" />
<rect x="253" y="537" width="1" height="6" fill="#fff" />
<rect x="256" y="537" width="1" height="6" fill="#fff" />
<rect x="260" y="537" width="1" height="11" fill="#fff" />
<rect x="282" y="537" width="1" height="6" fill="#fff" />
<rect x="293" y="537" width="1" height="6" fill="#fff" />
<rect x="299" y="537" width="1" height="6" fill="#fff" />
<rect x="302" y="537" width="1" height="6" fill="#fff" />
<rect x="306" y="537" width="1" height="11" fill="#fff" />
<rect x="328" y="537" width="1" height="6" fill="#fff" />
<rect x="339" y="537" width="1" height="6" fill="#fff" />
<rect x="345" y="537" width="1" height="6" fill="#fff" />
<rect x="348" y="537" width="1" height="6" fill="#fff" />
<rect x="351" y="537" width="1" height="11" fill="#fff" />
<rect x="373" y="537" width="1" height="6" fill="#fff" />
<rect x="384" y="537" width="1" height="6" fill="#fff" />
<rect x="390" y="537" width="1" height="6" fill="#fff" />
<rect x="393" y="537" width="1" height="6" fill="#fff" />
<rect x="397" y="537" width="1" height="11" fill="#fff" />
<rect x="419" y="537" width="1" height="6" fill="#fff" />
<rect x="430" y="537" width="1" height="6" fill="#fff" />
<rect x="436" y="537" width="1" height="6" fill="#fff" />
<rect x="439" y="537" width="1" height="6" fill="#fff" />
<rect x="443" y="537" width="1" height="11" fill="#fff" />
<rect x="465" y="537" width="1" height="6" fill="#fff" />
<rect x="476" y="537" width="1" height="6" fill="#fff" />
<rect x="482" y="537" width="1" height="6" fill="#fff" />
<rect x="485" y="537" width="1" height="6" fill="#fff" />
<rect x="489" y="537" width="1" height="11" fill="#fff" />
<line x1="32" y1="450.5" x2="489" y2="450.5" stroke="#ffffc8" stroke-width="1" stroke-dasharray="1 1" stroke-dashoffset="0"/>
<line x1="32" y1="480.5" x2="489" y2="480.5" stroke="#ffffc8" stroke-width="1" stroke-dasharray="1 1" stroke-dashoffset="0"/>
<line x1="32" y1="510.5" x2="489" y2="510.5" stroke="#ffffc8" stroke-width="1" stroke-dasharray="1 1" stroke-dashoffset="0"/>
<line x1="77.5" y1="421" x2="77.5" y2="535" stroke="#ffffc8" stroke-width="1" stroke-dasharray="1 1" stroke-dashoffset="0"/>
<line x1="123.5" y1="421" x2="123.5" y2="535" stroke="#ffffc8" stroke-width="1" stroke-dasharray="1 1" stroke-dashoffset="0"/>
<line x1="169.5" y1="421" x2="169.5" y2="535" stroke="#ffffc8" stroke-width="1" stroke-dasharray="1 1" stroke-dashoffset="0"/>
<line x1="214.5" y1="421" x2="214.5" y2="535" stroke="#ffffc8" stroke-width="1" stroke-dasharray="1 1" stroke-dashoffset="0"/>
<line x1="260.5" y1="421" x2="260.5" y2="535" stroke="#ffffc8" stroke-width="1" stroke-dasharray="1 1" stroke-dashoffset="0"/>
<line x1="306.5" y1="421" x2="306.5" y2="535" stroke="#ffffc8" stroke-width="1" stroke-dasharray="1 1" stroke-dashoffset="0"/>
<line x1="351.5" y1="421" x2="351.5" y2="535" stroke="#ffffc8" stroke-width="1" stroke-dasharray="1 1" stroke-dashoffset="0"/>
<line x1="397.5" y1="421" x2="397.5" y2="535" stroke="#ffffc8" stroke-width="1" stroke-dasharray="1 1" stroke-dashoffset="0"/>
<line x1="443.5" y1="421" x2="443.5" y2="535" stroke="#ffffc8" stroke-width="1" stroke-dasharray="1 1" stroke-dashoffset="0"/>
</g>
<text x="21.4" y="431" font-size="11" text-anchor="end" font-weight="normal" fill="#eff0f1" >0</text>
<text x="21.4" y="460" font-size="11" text-anchor="end" font-weight="normal" fill="#eff0f1" >-20</text>
<text x="21.4" y="490" font-size="11" text-anchor="end" font-weight="normal" fill="#eff0f1" >-40</text>
<text x="21.4" y="520" font-size="11" text-anchor="end" font-weight="normal" fill="#eff0f1" >-60</text>
<text x="21.4" y="544" font-size="11" text-anchor="end" font-weight="normal" fill="#eff0f1" >oo</text>
<text x="32.3" y="557" font-size="11" text-anchor="end" font-weight="normal" fill="#eff0f1" >0</text>
<text x="77.3" y="557" font-size="11" text-anchor="end" font-weight="normal" fill="#eff0f1" >53</text>
<text x="123.3" y="557" font-size="11" text-anchor="end" font-weight="normal" fill="#eff0f1" >105</text>
<text x="169.3" y="557" font-size="11" text-anchor="end" font-weight="normal" fill="#eff0f1" >207</text>
<text x="214.3" y="557" font-size="11" text-anchor="end" font-weight="normal" fill="#eff0f1" >406</text>
<text x="260.3" y="557" font-size="11" text-anchor="end" font-weight="normal" fill="#eff0f1" >802</text>
<text x="306.3" y="557" font-size="11" text-anchor="end" font-weight="normal" fill="#eff0f1" >1573</text>
<text x="351.3" y="557" font-size="11" text-anchor="end" font-weight="normal" fill="#eff0f1" >3084</text>
<text x="397.3" y="557" font-size="11" text-anchor="end" font-weight="normal" fill="#eff0f1" >6088</text>
<text x="443.3" y="557" font-size="11" text-anchor="end" font-weight="normal" fill="#eff0f1" >11937</text>
<text x="489.3" y="557" font-size="11" text-anchor="end" font-weight="normal" fill="#eff0f1" >23407</text>
<rect x="32" y="421" width="453" height="1" fill="#675a90" class="c"/>
<rect x="484" y="421" width="1" height="114" fill="#675a90" class="c"/>
<path class="c" d="M338 428.5h1M338 429.5h1M295 430.5h1M338 430.5h1M236 431.5h1M295 431.5h1M338 431.5h1M236 432.5h1M295 432.5h2M338 432.5h1M235 433.5h2M253 433.5h1M284 433.5h1M295 433.5h2M337 433.5h2M209 434.5h1M235 434.5h1M237 434.5h1M253 434.5h1M284 434.5h1M295 434.5h2M337 434.5h2M207 435.5h2M210 435.5h1M235 435.5h1M237 435.5h1M253 435.5h2M256 435.5h1M284 435.5h1M294 435.5h1M296 435.5h1M337 435.5h2M205 436.5h2M210 436.5h1M234 436.5h1M237 436.5h1M252 436.5h1M254 436.5h1M256 436.5h1M283 436.5h2M294 436.5h1M297 436.5h1M322 436.5h1M337 436.5h2M204 437.5h1M211 437.5h1M222 437.5h1M234 437.5h1M237 437.5h1M252 437.5h1M254 437.5h1M256 437.5h1M283 437.5h2M294 437.5h1M297 437.5h1M322 437.5h1M337 437.5h2M204 438.5h1M211 438.5h1M222 438.5h1M234 438.5h1M237 438.5h1M252 438.5h1M255 438.5h2M283 438.5h2M292 438.5h1M294 438.5h1M297 438.5h1M300 438.5h1M307 438.5h1M322 438.5h1M337 438.5h2M200 439.5h1M204 439.5h1M211 439.5h1M222 439.5h1M234 439.5h1M237 439.5h1M252 439.5h1M255 439.5h1M257 439.5h1M261 439.5h1M283 439.5h2M292 439.5h1M294 439.5h1M297 439.5h1M300 439.5h1M307 439.5h1M322 439.5h1M337 439.5h2M200 440.5h2M203 440.5h1M211 440.5h1M222 440.5h2M234 440.5h1M238 440.5h1M251 440.5h1M257 440.5h1M261 440.5h1M283 440.5h2M292 440.5h1M294 440.5h1M297 440.5h1M300 440.5h1M307 440.5h1M321 440.5h1M323 440.5h1M337 440.5h2M200 441.5h2M203 441.5h1M211 441.5h1M222 441.5h2M234 441.5h1M238 441.5h1M251 441.5h1M257 441.5h1M261 441.5h1M283 441.5h1M285 441.5h1M292 441.5h1M294 441.5h1M297 441.5h1M300 441.5h2M307 441.5h1M319 441.5h1M321 441.5h1M323 441.5h1M330 441.5h1M337 441.5h2M200 442.5h1M202 442.5h2M212 442.5h1M216 442.5h1M221 442.5h1M223 442.5h1M233 442.5h1M238 442.5h1M251 442.5h1M257 442.5h1M261 442.5h1M283 442.5h1M285 442.5h2M292 442.5h1M294 442.5h1M297 442.5h1M299 442.5h1M301 442.5h1M306 442.5h1M308 442.5h1M319 442.5h1M321 442.5h1M323 442.5h1M329 442.5h2M337 442.5h1M339 442.5h1M200 443.5h1M212 443.5h1M216 443.5h1M221 443.5h1M223 443.5h1M233 443.5h1M238 443.5h1M250 443.5h1M257 443.5h1M261 443.5h1M283 443.5h1M285 443.5h2M292 443.5h1M294 443.5h1M297 443.5h1M299 443.5h1M301 443.5h1M306 443.5h1M308 443.5h1M319 443.5h1M321 443.5h1M323 443.5h1M329 443.5h3M337 443.5h1M339 443.5h1M194 444.5h4M199 444.5h1M212 444.5h1M216 444.5h1M221 444.5h1M224 444.5h1M233 444.5h1M238 444.5h1M250 444.5h1M257 444.5h1M261 444.5h1M268 444.5h1M283 444.5h1M285 444.5h2M292 444.5h3M297 444.5h1M299 444.5h1M301 444.5h1M306 444.5h1M308 444.5h1M317 444.5h1M319 444.5h1M321 444.5h1M323 444.5h1M329 444.5h3M336 444.5h1M339 444.5h1M194 445.5h1M198 445.5h2M212 445.5h1M216 445.5h1M221 445.5h1M224 445.5h1M233 445.5h1M239 445.5h1M250 445.5h1M258 445.5h1M261 445.5h2M268 445.5h1M283 445.5h1M285 445.5h2M292 445.5h3M297 445.5h1M299 445.5h1M301 445.5h1M306 445.5h1M308 445.5h1M316 445.5h2M319 445.5h1M321 445.5h1M323 445.5h1M325 445.5h1M328 445.5h1M330 445.5h2M336 445.5h1M339 445.5h1M194 446.5h1M198 446.5h2M212 446.5h1M216 446.5h1M221 446.5h1M224 446.5h1M233 446.5h1M239 446.5h1M250 446.5h1M258 446.5h1M261 446.5h2M268 446.5h1M282 446.5h1M285 446.5h2M291 446.5h1M293 446.5h2M297 446.5h1M299 446.5h1M301 446.5h1M306 446.5h1M308 446.5h1M315 446.5h1M317 446.5h3M321 446.5h1M323 446.5h1M325 446.5h1M328 446.5h1M330 446.5h1M332 446.5h1M336 446.5h1M339 446.5h1M346 446.5h1M355 446.5h1M194 447.5h1M199 447.5h1M212 447.5h1M216 447.5h2M221 447.5h1M224 447.5h1M233 447.5h1M239 447.5h1M250 447.5h1M258 447.5h1M261 447.5h2M268 447.5h1M282 447.5h1M285 447.5h2M291 447.5h1M293 447.5h2M297 447.5h1M299 447.5h1M301 447.5h1M306 447.5h1M308 447.5h1M314 447.5h1M318 447.5h2M321 447.5h1M324 447.5h2M328 447.5h1M330 447.5h1M332 447.5h1M336 447.5h1M339 447.5h1M346 447.5h1M355 447.5h1M189 448.5h1M194 448.5h1M199 448.5h1M212 448.5h1M216 448.5h2M221 448.5h1M225 448.5h1M233 448.5h1M240 448.5h1M245 448.5h1M250 448.5h1M258 448.5h1M260 448.5h1M262 448.5h1M267 448.5h1M269 448.5h1M282 448.5h1M285 448.5h3M291 448.5h1M293 448.5h2M297 448.5h2M301 448.5h1M306 448.5h1M308 448.5h1M314 448.5h1M318 448.5h2M321 448.5h1M324 448.5h2M328 448.5h1M330 448.5h1M332 448.5h1M336 448.5h1M339 448.5h1M346 448.5h1M355 448.5h1M189 449.5h1M193 449.5h1M212 449.5h1M216 449.5h2M220 449.5h1M225 449.5h1M233 449.5h1M240 449.5h1M245 449.5h2M250 449.5h1M259 449.5h2M262 449.5h1M265 449.5h1M267 449.5h1M269 449.5h1M282 449.5h1M285 449.5h3M291 449.5h1M293 449.5h2M297 449.5h2M302 449.5h1M306 449.5h1M308 449.5h1M313 449.5h1M318 449.5h1M320 449.5h2M324 449.5h1M326 449.5h1M328 449.5h1M332 449.5h1M336 449.5h1M339 449.5h1M346 449.5h1M355 449.5h1M189 450.5h1M193 450.5h1M213 450.5h1M216 450.5h2M220 450.5h1M226 450.5h1M232 450.5h1M240 450.5h1M244 450.5h1M247 450.5h1M250 450.5h1M259 450.5h2M262 450.5h1M265 450.5h1M267 450.5h1M269 450.5h2M282 450.5h1M285 450.5h3M291 450.5h1M293 450.5h2M297 450.5h2M302 450.5h1M306 450.5h1M308 450.5h1M313 450.5h1M320 450.5h2M326 450.5h1M328 450.5h1M332 450.5h1M336 450.5h1M340 450.5h1M346 450.5h2M355 450.5h1M189 451.5h1M193 451.5h1M213 451.5h1M215 451.5h1M217 451.5h1M220 451.5h1M226 451.5h1M232 451.5h1M240 451.5h1M244 451.5h1M247 451.5h1M250 451.5h1M259 451.5h2M262 451.5h1M265 451.5h1M267 451.5h1M269 451.5h1M271 451.5h1M282 451.5h1M285 451.5h3M289 451.5h1M291 451.5h1M293 451.5h2M297 451.5h2M302 451.5h1M306 451.5h1M309 451.5h1M311 451.5h2M320 451.5h1M326 451.5h1M328 451.5h1M333 451.5h1M335 451.5h1M340 451.5h1M346 451.5h2M354 451.5h2M189 452.5h1M193 452.5h1M213 452.5h1M215 452.5h1M217 452.5h1M220 452.5h1M227 452.5h1M232 452.5h1M241 452.5h1M244 452.5h1M248 452.5h1M250 452.5h1M259 452.5h2M262 452.5h1M265 452.5h1M267 452.5h1M272 452.5h1M282 452.5h1M285 452.5h5M291 452.5h1M293 452.5h2M297 452.5h2M302 452.5h1M306 452.5h1M309 452.5h1M311 452.5h2M320 452.5h1M326 452.5h1M328 452.5h1M333 452.5h1M335 452.5h1M340 452.5h1M346 452.5h2M354 452.5h2M359 452.5h1M189 453.5h1M193 453.5h1M213 453.5h1M215 453.5h1M218 453.5h1M220 453.5h1M227 453.5h1M232 453.5h1M241 453.5h1M244 453.5h1M248 453.5h2M260 453.5h1M262 453.5h1M265 453.5h3M272 453.5h1M282 453.5h1M285 453.5h5M291 453.5h1M293 453.5h2M297 453.5h2M302 453.5h1M306 453.5h1M309 453.5h2M320 453.5h1M326 453.5h1M328 453.5h1M333 453.5h2M340 453.5h1M346 453.5h2M354 453.5h2M359 453.5h1M190 454.5h1M193 454.5h1M213 454.5h1M215 454.5h1M218 454.5h2M228 454.5h1M232 454.5h1M241 454.5h1M244 454.5h1M248 454.5h2M260 454.5h1M262 454.5h1M265 454.5h2M272 454.5h1M281 454.5h1M285 454.5h3M289 454.5h1M291 454.5h1M294 454.5h1M297 454.5h2M302 454.5h1M306 454.5h1M309 454.5h2M320 454.5h1M326 454.5h2M333 454.5h2M340 454.5h1M342 454.5h1M346 454.5h2M354 454.5h2M359 454.5h1M190 455.5h1M193 455.5h1M214 455.5h2M219 455.5h1M228 455.5h1M232 455.5h1M241 455.5h1M244 455.5h1M248 455.5h2M260 455.5h1M262 455.5h1M264 455.5h1M266 455.5h1M273 455.5h1M281 455.5h1M285 455.5h2M289 455.5h1M291 455.5h1M294 455.5h1M297 455.5h2M302 455.5h1M306 455.5h1M309 455.5h2M320 455.5h1M326 455.5h2M333 455.5h1M341 455.5h2M346 455.5h2M354 455.5h2M359 455.5h1M190 456.5h1M193 456.5h1M214 456.5h2M219 456.5h1M228 456.5h1M232 456.5h1M241 456.5h1M244 456.5h1M248 456.5h2M262 456.5h1M264 456.5h1M266 456.5h1M273 456.5h1M281 456.5h1M286 456.5h1M289 456.5h1M291 456.5h1M294 456.5h1M297 456.5h2M303 456.5h1M306 456.5h1M309 456.5h1M320 456.5h1M326 456.5h2M341 456.5h2M346 456.5h1M348 456.5h1M354 456.5h2M359 456.5h1M190 457.5h1M192 457.5h1M214 457.5h2M228 457.5h1M232 457.5h1M241 457.5h1M244 457.5h1M249 457.5h1M262 457.5h1M264 457.5h1M266 457.5h1M273 457.5h1M280 457.5h1M286 457.5h1M290 457.5h2M294 457.5h1M297 457.5h1M303 457.5h1M305 457.5h1M309 457.5h1M320 457.5h1M327 457.5h1M343 457.5h1M346 457.5h1M348 457.5h1M354 457.5h2M359 457.5h1M190 458.5h1M192 458.5h1M215 458.5h1M228 458.5h1M232 458.5h1M242 458.5h1M244 458.5h1M249 458.5h1M262 458.5h1M264 458.5h1M273 458.5h1M280 458.5h1M286 458.5h1M290 458.5h2M294 458.5h1M297 458.5h1M304 458.5h2M327 458.5h1M343 458.5h1M346 458.5h1M348 458.5h1M354 458.5h1M356 458.5h1M358 458.5h1M190 459.5h1M192 459.5h1M215 459.5h1M229 459.5h1M232 459.5h1M242 459.5h1M244 459.5h1M249 459.5h1M263 459.5h2M274 459.5h1M280 459.5h1M286 459.5h1M290 459.5h2M297 459.5h1M304 459.5h1M327 459.5h1M343 459.5h1M346 459.5h1M348 459.5h1M353 459.5h1M356 459.5h1M358 459.5h1M190 460.5h3M229 460.5h1M232 460.5h1M242 460.5h1M244 460.5h1M249 460.5h1M263 460.5h2M275 460.5h1M280 460.5h1M286 460.5h1M290 460.5h2M297 460.5h1M327 460.5h1M343 460.5h1M346 460.5h1M348 460.5h1M353 460.5h1M356 460.5h3M229 461.5h1M231 461.5h1M242 461.5h2M249 461.5h1M263 461.5h2M275 461.5h1M279 461.5h1M286 461.5h1M290 461.5h1M297 461.5h1M344 461.5h1M346 461.5h1M348 461.5h1M353 461.5h1M356 461.5h3M229 462.5h1M231 462.5h1M242 462.5h2M263 462.5h2M276 462.5h1M279 462.5h1M286 462.5h1M290 462.5h1M344 462.5h2M348 462.5h1M353 462.5h1M356 462.5h3M229 463.5h1M231 463.5h1M242 463.5h2M263 463.5h2M276 463.5h1M279 463.5h1M290 463.5h1M344 463.5h2M348 463.5h1M352 463.5h1M356 463.5h3M229 464.5h1M231 464.5h1M242 464.5h2M263 464.5h1M276 464.5h1M279 464.5h1M290 464.5h1M344 464.5h2M348 464.5h1M352 464.5h1M356 464.5h2M230 465.5h2M243 465.5h1M263 465.5h1M276 465.5h1M279 465.5h1M290 465.5h1M344 465.5h2M349 465.5h1M352 465.5h1M356 465.5h2M231 466.5h1M243 466.5h1M263 466.5h1M277 466.5h1M279 466.5h1M290 466.5h1M344 466.5h2M349 466.5h1M352 466.5h1M356 466.5h1M243 467.5h1M277 467.5h1M279 467.5h1M290 467.5h1M345 467.5h1M349 467.5h1M352 467.5h1M356 467.5h1M243 468.5h1M277 468.5h1M279 468.5h1M290 468.5h1M345 468.5h1M349 468.5h1M352 468.5h1M356 468.5h1M243 469.5h1M277 469.5h2M345 469.5h1M349 469.5h1M352 469.5h1M356 469.5h1M277 470.5h2M345 470.5h1M349 470.5h1M352 470.5h1M356 470.5h1M278 471.5h1M349 471.5h1M352 471.5h1M278 472.5h1M349 472.5h1M352 472.5h1M278 473.5h1M349 473.5h1M351 473.5h1M278 474.5h1M350 474.5h2M350 475.5h2M350 476.5h2M350 477.5h2M350 478.5h2M350 479.5h2M351 480.5h1M351 481.5h1" stroke="#675a90" stroke-width="1" fill="none"/>
<g class="c">
<rect x="32" y="535" width="157" height="2" fill="#98d070" />
<rect x="187" y="421" width="2" height="116" fill="#98d070" />
<rect x="187" y="421" width="175" height="1" fill="#98d070" />
<rect x="360" y="421" width="2" height="116" fill="#98d070" />
<rect x="360" y="535" width="129" height="2" fill="#98d070" />
</g>
<path d="M327.8 505.3 L339.7 517.5 L336.6 520.5 V524.4 L335 525.8 L331.4 522.5 H327.5 Z" fill="#4a4a4a" stroke="#ffffff" stroke-width="0.9" stroke-linejoin="round"/>
<text transform="translate(499 20) scale(1 1.055)" font-size="13" text-anchor="start" font-weight="normal" fill="#eff0f1" >Attack secs:</text>
<rect class="c" x="499.5" y="23.5" width="99" height="22" fill="#232629" stroke="#7f8c8d" stroke-width="1"/>
<text transform="translate(503 39) scale(1 1.055)" font-size="13" text-anchor="start" font-weight="normal" fill="#eff0f1" >1.00</text>
<path d="M608.5 24.4 L615.5 31.9 H601.5 Z" fill="#c9caca"/>
<path d="M601.5 34.9 H615.5 L608.5 41.9 Z" fill="#c9caca"/>
<rect x="600.5" y="32.4" width="16" height="2" fill="#2a2e32"/>
<text transform="translate(499 64) scale(1 1.055)" font-size="13" text-anchor="start" font-weight="normal" fill="#eff0f1" >Release secs:</text>
<rect class="c" x="499.5" y="67.5" width="99" height="22" fill="#232629" stroke="#7f8c8d" stroke-width="1"/>
<text transform="translate(503 83) scale(1 1.055)" font-size="13" text-anchor="start" font-weight="normal" fill="#eff0f1" >1.00</text>
<path d="M608.5 68.4 L615.5 75.9 H601.5 Z" fill="#c9caca"/>
<path d="M601.5 78.9 H615.5 L608.5 85.9 Z" fill="#c9caca"/>
<rect x="600.5" y="76.4" width="16" height="2" fill="#2a2e32"/>
<rect class="c" x="499.5" y="95.5" width="21" height="21" fill="#232629" stroke="#bcc0c2" stroke-width="1"/>
<text transform="translate(526 110) scale(1 1.055)" font-size="13" text-anchor="start" font-weight="normal" fill="#eff0f1" >Solo band</text>
<rect class="c" x="499.5" y="122.5" width="21" height="21" fill="#232629" stroke="#bcc0c2" stroke-width="1"/>
<text transform="translate(526 137) scale(1 1.055)" font-size="13" text-anchor="start" font-weight="normal" fill="#eff0f1" >Bypass band</text>
<text transform="translate(499 162) scale(1 1.055)" font-size="13" text-anchor="start" font-weight="normal" fill="#eff0f1" >Output:</text>
<rect class="c" x="499.5" y="165.5" width="99" height="22" fill="#232629" stroke="#7f8c8d" stroke-width="1"/>
<text transform="translate(503 181) scale(1 1.055)" font-size="13" text-anchor="start" font-weight="normal" fill="#eff0f1" >-20.12</text>
<path d="M608.5 166.4 L615.5 173.9 H601.5 Z" fill="#c9caca"/>
<path d="M601.5 176.9 H615.5 L608.5 183.9 Z" fill="#c9caca"/>
<rect x="600.5" y="174.4" width="16" height="2" fill="#2a2e32"/>
<text transform="translate(499 206) scale(1 1.055)" font-size="13" text-anchor="start" font-weight="normal" fill="#eff0f1" >Input:</text>
<rect class="c" x="499.5" y="209.5" width="99" height="22" fill="#232629" stroke="#7f8c8d" stroke-width="1"/>
<text transform="translate(503 225) scale(1 1.055)" font-size="13" text-anchor="start" font-weight="normal" fill="#eff0f1" >2.26</text>
<path d="M608.5 210.4 L615.5 217.9 H601.5 Z" fill="#c9caca"/>
<path d="M601.5 220.9 H615.5 L608.5 227.9 Z" fill="#c9caca"/>
<rect x="600.5" y="218.4" width="16" height="2" fill="#2a2e32"/>
<rect x="499.5" y="237.5" width="73" height="19" rx="2.5" fill="#31363b" stroke="#a8acae" stroke-width="1"/>
<text transform="translate(536.0 251) scale(1 1.055)" font-size="13" text-anchor="middle" font-weight="normal" fill="#eff0f1" >Clear</text>
<text transform="translate(499 275) scale(1 1.055)" font-size="13" text-anchor="start" font-weight="normal" fill="#eff0f1" >Gain:</text>
<text transform="translate(563 275) scale(1 1.055)" font-size="13" text-anchor="start" font-weight="normal" fill="#eff0f1" >Freq range:</text>
<circle cx="517.3" cy="301.3" r="17.6" fill="#232629" stroke="#7f8c8d" stroke-width="1.6"/>
<line x1="516.5" y1="301.0" x2="516.5" y2="284.0" stroke="#fff" stroke-width="1"/>
<circle cx="581.3" cy="301.3" r="17.6" fill="#232629" stroke="#7f8c8d" stroke-width="1.6"/>
<line x1="580.5" y1="301.0" x2="567.3" y2="287.3" stroke="#fff" stroke-width="1"/>
<circle cx="624.6" cy="301.3" r="17.6" fill="#232629" stroke="#7f8c8d" stroke-width="1.6"/>
<line x1="623.8000000000001" y1="301.0" x2="639.2" y2="291.0" stroke="#fff" stroke-width="1"/>
<rect x="499" y="326" width="145" height="1" fill="#2a2e33" class="c"/>
<rect x="499" y="327" width="145" height="1" fill="#3b4049" class="c"/>
<text transform="translate(499 346) scale(1 1.055)" font-size="13" text-anchor="start" font-weight="normal" fill="#eff0f1" >Trigger Type:</text>
<rect x="499.5" y="349.5" width="99" height="19" rx="2.5" fill="#31363b" stroke="#a8acae" stroke-width="1"/>
<text transform="translate(541.8 363) scale(1 1.055)" font-size="13" text-anchor="middle" font-weight="normal" fill="#eff0f1" >Trigger</text>
<path d="M569.8 353.6 H579.6 L574.7 363.2 Z" fill="#fff"/>
<text transform="translate(499 387) scale(1 1.055)" font-size="13" text-anchor="start" font-weight="normal" fill="#eff0f1" >Channel:</text>
<rect class="c" x="499.5" y="390.5" width="99" height="22" fill="#232629" stroke="#7f8c8d" stroke-width="1"/>
<text transform="translate(503 406) scale(1 1.055)" font-size="13" text-anchor="start" font-weight="normal" fill="#eff0f1" >0</text>
<path d="M608.5 391.4 L615.5 398.9 H601.5 Z" fill="#c9caca"/>
<path d="M601.5 401.9 H615.5 L608.5 408.9 Z" fill="#c9caca"/>
<rect x="600.5" y="399.4" width="16" height="2" fill="#2a2e32"/>
<rect class="c" x="499.5" y="418.5" width="21" height="21" fill="#232629" stroke="#bcc0c2" stroke-width="1"/>
<text transform="translate(526 433) scale(1 1.055)" font-size="13" text-anchor="start" font-weight="normal" fill="#eff0f1" >Smooth only</text>
<text transform="translate(499 458) scale(1 1.055)" font-size="13" text-anchor="start" font-weight="normal" fill="#eff0f1" >Steepness:</text>
<circle cx="624.6" cy="463.9" r="17.6" fill="#232629" stroke="#7f8c8d" stroke-width="1.6"/>
<line x1="623.8000000000001" y1="463.59999999999997" x2="636.8" y2="474.9" stroke="#fff" stroke-width="1"/>
<text transform="translate(499 501) scale(1 1.055)" font-size="13" text-anchor="start" font-weight="normal" fill="#eff0f1" >Window size:</text>
<rect x="499.5" y="504.5" width="99" height="19" rx="2.5" fill="#31363b" stroke="#a8acae" stroke-width="1"/>
<text transform="translate(541.8 518) scale(1 1.055)" font-size="13" text-anchor="middle" font-weight="normal" fill="#eff0f1" >4096</text>
<path d="M569.8 508.6 H579.6 L574.7 518.2 Z" fill="#fff"/>
<rect x="499.5" y="529.5" width="76" height="19" rx="2.5" fill="#31363b" stroke="#a8acae" stroke-width="1"/>
<text transform="translate(537.5 543) scale(1 1.055)" font-size="13" text-anchor="middle" font-weight="normal" fill="#eff0f1" >Reset</text>
</svg></body></html>
